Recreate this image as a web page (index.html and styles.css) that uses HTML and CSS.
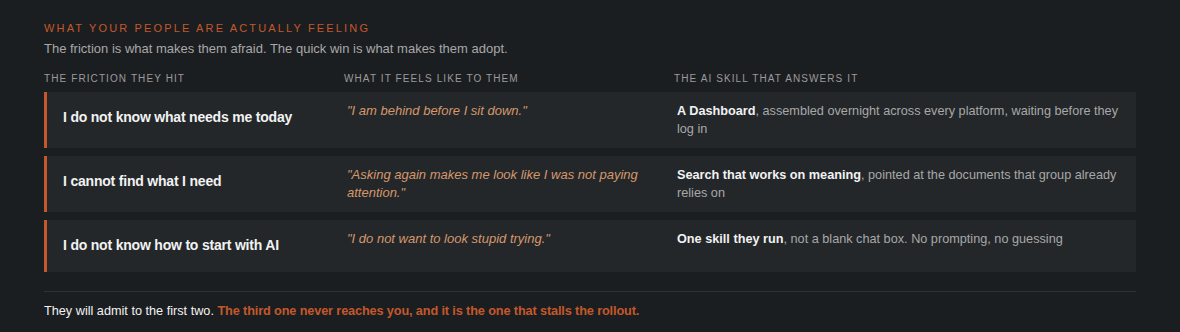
FILE: index.html
```html
<!DOCTYPE html>
<html>
<head>
    <title>What your people are actually feeling</title>
    <link rel="stylesheet" href="styles.css">
</head>
<body>
    <section class="feelings">
        <div class="eyebrow">What your people are actually feeling</div>
        <p class="lead">The friction is what makes them afraid. The quick win is what makes them adopt.</p>

        <div class="table-head">
            <div>The friction they hit</div>
            <div>What it feels like to them</div>
            <div>The AI skill that answers it</div>
        </div>

        <div class="rows">
            <div class="row">
                <div class="friction">I do not know what needs me today</div>
                <div class="feeling">"I am behind before I sit down."</div>
                <div class="answer"><strong>A Dashboard</strong>, assembled overnight across every platform, waiting before they log in</div>
            </div>
            <div class="row">
                <div class="friction">I cannot find what I need</div>
                <div class="feeling">"Asking again makes me look like I was not paying attention."</div>
                <div class="answer"><strong>Search that works on meaning</strong>, pointed at the documents that group already relies on</div>
            </div>
            <div class="row">
                <div class="friction">I do not know how to start with AI</div>
                <div class="feeling">"I do not want to look stupid trying."</div>
                <div class="answer"><strong>One skill they run</strong>, not a blank chat box. No prompting, no guessing</div>
            </div>
        </div>

        <p class="footnote">They will admit to the first two. <strong>The third one never reaches you, and it is the one that stalls the rollout.</strong></p>
    </section>
</body>
</html>
```

FILE: styles.css
```css
:root {
    --bg: #1b1e21;
    --row-bg: #23272a;
    --accent: #c4582a;
    --quote: #d6976b;
    --text: #f2f2f2;
    --muted: #a8a8a8;
    --label: #9b9b9b;
    --rule: #2e3236;
}

* {
    box-sizing: border-box;
    margin: 0;
    padding: 0;
}

body {
    font-family: "Liberation Sans", Arial, sans-serif;
    background-color: var(--bg);
    color: var(--text);
    min-height: 100vh;
}

.feelings {
    width: 1092px;
    margin-left: 44px;
    padding-top: 20px;
}

.eyebrow {
    color: var(--accent);
    font-size: 11px;
    line-height: 16px;
    letter-spacing: 2.15px;
    text-transform: uppercase;
}

.lead {
    color: var(--muted);
    font-size: 13px;
    line-height: 18px;
    margin-top: 4px;
}

.table-head {
    display: grid;
    grid-template-columns: 300px 330px 1fr;
    margin-top: 14px;
    color: var(--label);
    font-size: 10px;
    line-height: 14px;
    letter-spacing: 1.1px;
    text-transform: uppercase;
}

.rows {
    display: flex;
    flex-direction: column;
    gap: 8px;
    margin-top: 6px;
}

.row {
    display: grid;
    grid-template-columns: 300px 330px 1fr;
    align-items: start;
    background: var(--row-bg);
    border-left: 3px solid var(--accent);
}

.friction {
    padding: 15px 16px 17px;
    font-size: 14px;
    line-height: 20px;
    letter-spacing: -0.2px;
    font-weight: bold;
    color: var(--text);
}

.feeling,
.answer {
    padding: 10px 24px 10px 0;
    line-height: 18px;
}

.feeling {
    font-size: 13px;
    color: var(--quote);
    font-style: italic;
}

.answer {
    font-size: 12.7px;
    color: var(--muted);
    padding-right: 12px;
}

.answer strong {
    color: var(--text);
}

.footnote {
    margin-top: 19px;
    border-top: 1px solid var(--rule);
    padding-top: 10px;
    font-size: 12.7px;
    line-height: 18px;
    color: var(--text);
}

.footnote strong {
    color: var(--accent);
    letter-spacing: -0.12px;
}
```
